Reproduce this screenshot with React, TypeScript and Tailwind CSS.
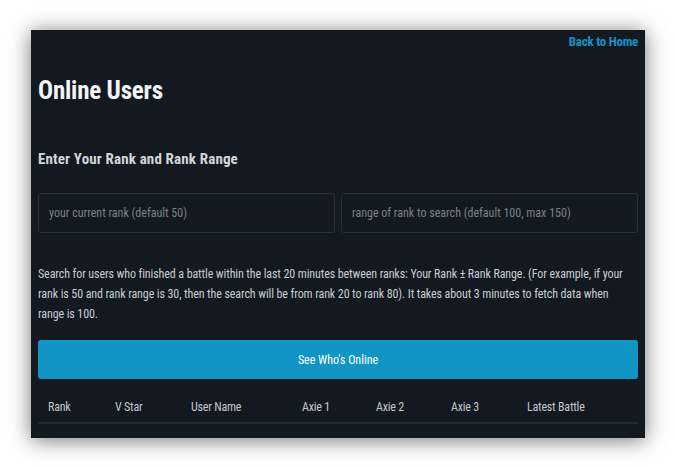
const COLUMNS: { label: string; width: string }[] = [
  { label: "Rank", width: "w-[67px]" },
  { label: "V Star", width: "w-[76px]" },
  { label: "User Name", width: "w-[111px]" },
  { label: "Axie 1", width: "w-[74px]" },
  { label: "Axie 2", width: "w-[75px]" },
  { label: "Axie 3", width: "w-[76px]" },
  { label: "Latest Battle", width: "w-[121px]" },
];

const inputCls =
  "h-[40px] rounded-[3px] border border-[#27303a] bg-transparent px-[10px] text-[12px] text-gray-200 placeholder:text-[#7b828a] outline-none";

export default function App() {
  return (
    <div className="w-[676px] h-[468px] bg-white pt-[30px] pl-[31px] font-['Roboto_Condensed',Roboto,sans-serif]">
      <div className="w-[614px] h-[408px] bg-[#121920] shadow-[0_2px_20px_rgba(0,0,0,0.55)] px-[7px] pt-[4px]">
        <div className="flex justify-end">
          <a href="#" className="text-[13px] leading-4 font-bold tracking-[-0.25px] text-[#1a91c4]">
            Back to Home
          </a>
        </div>

        <h1 className="mt-[26px] text-[25px] leading-[30px] font-bold tracking-[-0.2px] text-[#f4f5f6]">Online Users</h1>

        <h2 className="mt-[43px] text-[15px] leading-5 font-bold tracking-[0.15px] text-[#d3d6da]">
          Enter Your Rank and Rank Range
        </h2>

        <div className="mt-[24px] grid grid-cols-2 gap-[6px]">
          <input className={inputCls} placeholder="your current rank (default 50)" />
          <input className={inputCls} placeholder="range of rank to search (default 100, max 150)" />
        </div>

        <p className="mt-[31px] w-[585px] text-[12px] leading-5 tracking-[-0.1px] text-[#c9cdd2]">
          Search for users who finished a battle within the last 20 minutes between ranks: Your Rank ± Rank Range. (For
          example, if your rank is 50 and rank range is 30, then the search will be from rank 20 to rank 80). It takes
          about 3 minutes to fetch data when range is 100.
        </p>

        <button className="mt-[16px] w-full h-[39px] rounded-[3px] bg-[#1195c5] text-[12px] text-white">
          See Who's Online
        </button>

        <table className="w-full table-fixed border-b-2 border-[#202a34]">
          <thead>
            <tr>
              {COLUMNS.map((c) => (
                <th
                  key={c.label}
                  className={`${c.width} pl-[10px] pt-[18px] pb-[5px] text-left text-[12px] leading-5 font-normal tracking-[-0.2px] text-[#c3c7cc]`}
                >
                  {c.label}
                </th>
              ))}
            </tr>
          </thead>
        </table>
      </div>
    </div>
  );
}
